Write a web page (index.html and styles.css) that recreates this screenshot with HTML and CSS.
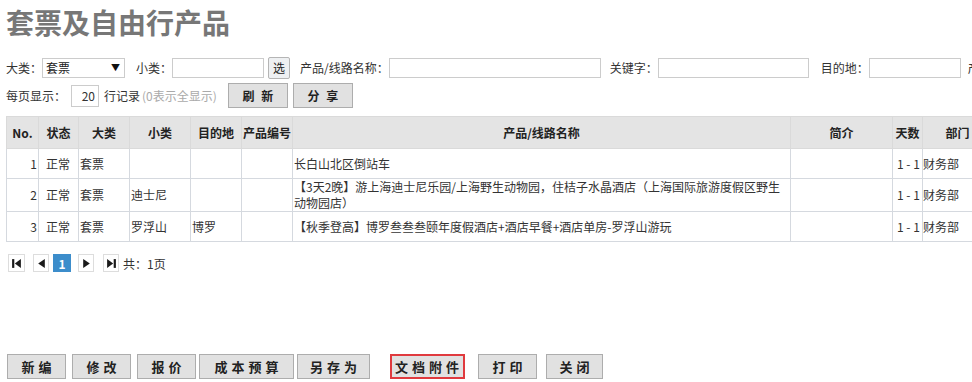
FILE: index.html
```html
<!DOCTYPE html>
<html lang="zh-CN">

<head>
    <meta charset="UTF-8">
    <title>套票及自由行产品</title>
    <link rel="stylesheet" href="styles.css">
</head>

<body>
    <h1 class="page-title">套票及自由行产品</h1>

    <div class="filter-row">
        <span class="label">大类<span class="colon">：</span></span>
        <div class="select-box"><span>套票</span><span class="arrow">▼</span></div>
        <span class="label gap-11">小类<span class="colon">：</span></span>
        <input type="text" class="field w-92">
        <button class="pick-btn">选</button>
        <span class="label gap-10">产品/线路名称<span class="colon">：</span></span>
        <input type="text" class="field w-212">
        <span class="label gap-9">关键字<span class="colon">：</span></span>
        <input type="text" class="field w-151">
        <span class="label gap-12">目的地<span class="colon">：</span></span>
        <input type="text" class="field w-92">
        <span class="label gap-7">产品编号<span class="colon">：</span></span>
    </div>

    <div class="page-row">
        <span class="label">每页显示<span class="colon">：</span></span>
        <input type="text" class="field page-size" value="20">
        <span class="label">行记录</span>
        <span class="hint">(0表示全显示)</span>
        <button class="tool-btn first">刷 新</button>
        <button class="tool-btn">分 享</button>
    </div>

    <table class="grid">
        <colgroup>
            <col class="c-no">
            <col class="c-state">
            <col class="c-big">
            <col class="c-small">
            <col class="c-dest">
            <col class="c-code">
            <col class="c-name">
            <col class="c-intro">
            <col class="c-days">
            <col class="c-dept">
        </colgroup>
        <thead>
            <tr>
                <th>No.</th>
                <th>状态</th>
                <th>大类</th>
                <th>小类</th>
                <th>目的地</th>
                <th>产品编号</th>
                <th>产品/线路名称</th>
                <th>简介</th>
                <th>天数</th>
                <th>部门</th>
            </tr>
        </thead>
        <tbody>
            <tr>
                <td class="num">1</td>
                <td class="center">正常</td>
                <td>套票</td>
                <td></td>
                <td></td>
                <td></td>
                <td>长白山北区倒站车</td>
                <td></td>
                <td class="days">1 - 1</td>
                <td class="dept">财务部</td>
            </tr>
            <tr>
                <td class="num">2</td>
                <td class="center">正常</td>
                <td>套票</td>
                <td>迪士尼</td>
                <td></td>
                <td></td>
                <td>【3天2晚】游上海迪士尼乐园/上海野生动物园，住桔子水晶酒店（上海国际旅游度假区野生动物园店）</td>
                <td></td>
                <td class="days">1 - 1</td>
                <td class="dept">财务部</td>
            </tr>
            <tr>
                <td class="num">3</td>
                <td class="center">正常</td>
                <td>套票</td>
                <td>罗浮山</td>
                <td>博罗</td>
                <td></td>
                <td>【秋季登高】博罗叁叁叁颐年度假酒店+酒店早餐+酒店单房-罗浮山游玩</td>
                <td></td>
                <td class="days">1 - 1</td>
                <td class="dept">财务部</td>
            </tr>
        </tbody>
    </table>

    <div class="pager">
        <span class="pg-box pg-first"><svg width="11" height="11" viewBox="0 0 10 10"><rect x="1" y="1" width="2" height="8"/><path d="M9 1 L3.5 5 L9 9Z"/></svg></span>
        <span class="pg-box pg-prev"><svg width="11" height="11" viewBox="0 0 10 10"><path d="M8 1 L2 5 L8 9Z"/></svg></span>
        <span class="pg-box pg-current">1</span>
        <span class="pg-box pg-next"><svg width="11" height="11" viewBox="0 0 10 10"><path d="M2 1 L8 5 L2 9Z"/></svg></span>
        <span class="pg-box pg-last"><svg width="11" height="11" viewBox="0 0 10 10"><path d="M1 1 L6.5 5 L1 9Z"/><rect x="7" y="1" width="2" height="8"/></svg></span>
        <span class="pg-total">共<span class="colon">：</span>1页</span>
    </div>

    <div class="actions">
        <button class="btn w-59">新编</button>
        <button class="btn w-59">修改</button>
        <button class="btn w-59">报价</button>
        <button class="btn w-95 tight">成本预算</button>
        <button class="btn w-73 tight">另存为</button>
        <button class="btn w-75 btn-focus">文档附件</button>
        <button class="btn w-59 after-focus">打印</button>
        <button class="btn w-57 wide">关闭</button>
    </div>
</body>

</html>
```

FILE: styles.css
```css
html {
    overflow: hidden;
}

body {
    margin: 0;
    padding: 0 6px;
    font-family: "Noto Sans CJK SC", "Microsoft YaHei", sans-serif;
    font-size: 12px;
    color: #333;
    background: #fff;
}

/* centred full-width colon, as the original font draws it */
.colon {
    font-family: "Noto Sans CJK TC", sans-serif;
}

.page-title {
    margin: 0;
    padding-top: 5px;
    font-size: 28px;
    line-height: 34px;
    font-weight: bold;
    color: #777;
}

/* filter rows */
.filter-row,
.page-row {
    display: flex;
    align-items: center;
    white-space: nowrap;
}

.filter-row {
    height: 23px;
    margin-top: 17px;
}

.page-row {
    height: 25px;
    margin-top: 4px;
}

.label {
    flex: none;
}

.gap-7 { margin-left: 7px; }
.gap-9 { margin-left: 9px; }
.gap-10 { margin-left: 10px; }
.gap-11 { margin-left: 11px; }
.gap-12 { margin-left: 12px; }

.select-box {
    flex: none;
    display: flex;
    align-items: center;
    justify-content: space-between;
    box-sizing: border-box;
    width: 83px;
    height: 20px;
    padding: 0 4px 0 3px;
    border: 1px solid #ccc;
    color: #222;
}

.select-box .arrow {
    font-size: 9px;
    color: #111;
}

.field {
    flex: none;
    box-sizing: border-box;
    height: 20px;
    margin: 0;
    padding: 0 3px;
    border: 1px solid #ccc;
    font: inherit;
    color: #333;
    outline: none;
}

.w-92 { width: 92px; }
.w-151 { width: 151px; }
.w-212 { width: 212px; }

.pick-btn {
    flex: none;
    box-sizing: border-box;
    width: 22px;
    height: 22px;
    margin: 0 0 0 4px;
    padding: 0;
    border: 1px solid #b5b5b5;
    border-radius: 2px;
    background: #eef0f2;
    font: inherit;
    color: #222;
}

.page-size {
    width: 28px;
    height: 22px;
    margin: 0 5px;
    text-align: right;
}

.hint {
    color: #aaa;
    margin-left: 2px;
}

.tool-btn {
    flex: none;
    box-sizing: border-box;
    width: 60px;
    height: 25px;
    margin: 0 0 0 5px;
    padding: 0 0 0 2px;
    border: 1px solid #adadad;
    background: #e1e1e1;
    font: inherit;
    font-weight: bold;
    letter-spacing: 2px;
    color: #222;
}

.tool-btn.first {
    margin-left: 11px;
}

/* list table */
.grid {
    margin-top: 8px;
    border-collapse: collapse;
    table-layout: fixed;
    width: 986px;
}

.c-no { width: 32px; }
.c-state { width: 40px; }
.c-big { width: 51px; }
.c-small { width: 61px; }
.c-dest { width: 51px; }
.c-code { width: 51px; }
.c-name { width: 498px; }
.c-intro { width: 102px; }
.c-days { width: 30px; }
.c-dept { width: 70px; }

.grid th {
    height: 31px;
    padding: 0;
    background: #e4e4e4;
    border: 1px solid #dadada;
    font-weight: bold;
    color: #222;
    text-align: center;
    white-space: nowrap;
}

.grid td {
    height: 29px;
    padding: 0 2px 0 1px;
    border: 1px solid #d5d9df;
    line-height: 16px;
    vertical-align: middle;
}

.grid td.num {
    text-align: right;
    padding-right: 1px;
}

.grid td.center {
    text-align: center;
}

.grid td.days {
    padding-left: 4px;
    white-space: nowrap;
    overflow: visible;
}

.grid td.dept {
    padding-left: 0;
}

/* pager */
.pager {
    display: flex;
    align-items: center;
    margin-top: 12px;
    height: 18px;
}

.pg-box {
    display: flex;
    align-items: center;
    justify-content: center;
    box-sizing: border-box;
    width: 16px;
    height: 18px;
    border: 1px solid #ddd;
    fill: #1a1a1a;
}

.pg-first { margin-left: 2px; width: 17px; }
.pg-prev { margin-left: 8px; }
.pg-current {
    margin-left: 4px;
    width: 18px;
    border-color: #3c8dcb;
    background: #3c8dcb;
    color: #fff;
    font-weight: bold;
}
.pg-next { margin-left: 7px; }
.pg-last { margin-left: 9px; }

.pg-total {
    margin-left: 4px;
}

/* bottom buttons */
.actions {
    display: flex;
    margin-top: 82px;
    padding-left: 1px;
}

.btn {
    box-sizing: border-box;
    height: 25px;
    margin: 0 0 0 6px;
    padding: 0 0 0 4px;
    border: 1px solid #adadad;
    background: #e1e1e1;
    font-family: inherit;
    font-size: 13px;
    font-weight: bold;
    letter-spacing: 4px;
    white-space: nowrap;
    color: #222;
}

.btn:first-child {
    margin-left: 0;
}

.btn.tight {
    margin-left: 3px;
}

.btn.wide {
    margin-left: 9px;
}

.w-57 { width: 57px; }
.w-59 { width: 59px; }
.w-73 { width: 73px; }
.w-75 { width: 75px; }
.w-95 { width: 95px; }

.btn-focus {
    margin-left: 20px;
    padding-left: 3px;
    border: 2px solid #e03a3e;
}

.after-focus {
    margin-left: 13px;
}
```
